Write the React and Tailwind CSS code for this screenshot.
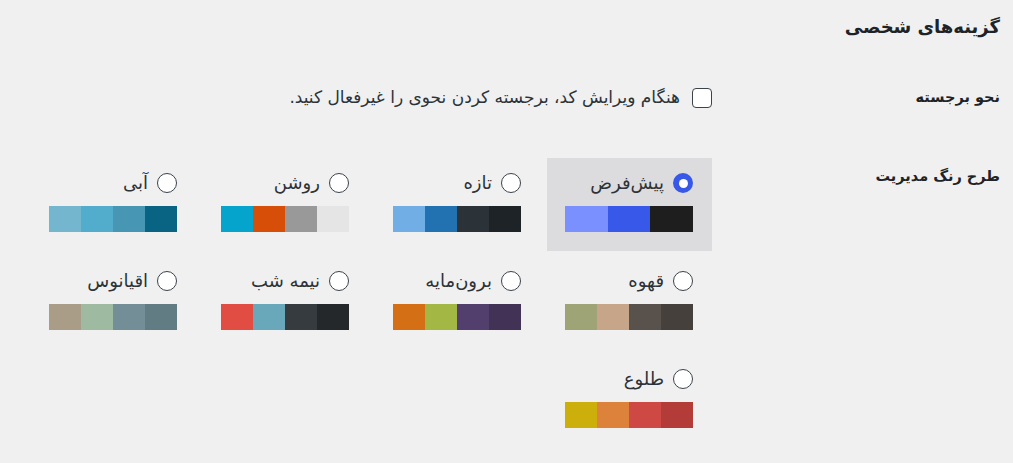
import React from "react";

const schemes = [
  { name: "پیش‌فرض", colors: ["#1e1e1e", "#3858e9", "#7b90ff"], selected: true },
  { name: "تازه", colors: ["#1d2327", "#2c3338", "#2271b1", "#72aee6"] },
  { name: "روشن", colors: ["#e5e5e5", "#999999", "#d64e07", "#04a4cc"] },
  { name: "آبی", colors: ["#096484", "#4796b3", "#52accc", "#74b6ce"] },
  { name: "قهوه", colors: ["#46403c", "#59524c", "#c7a589", "#9ea476"] },
  { name: "برون‌مایه", colors: ["#413256", "#523f6d", "#a3b745", "#d46f15"] },
  { name: "نیمه شب", colors: ["#25282b", "#363b3f", "#69a8bb", "#e14d43"] },
  { name: "اقیانوس", colors: ["#627c83", "#738e96", "#9ebaa0", "#aa9d88"] },
  { name: "طلوع", colors: ["#b43c38", "#cf4944", "#dd823b", "#ccaf0b"] },
];

function Radio({ checked }) {
  if (checked) {
    return (
      <span className="flex h-[20px] w-[20px] shrink-0 items-center justify-center rounded-full bg-[#3858e9]">
        <span className="h-[9px] w-[9px] rounded-full bg-white" />
      </span>
    );
  }
  return <span className="h-[20px] w-[20px] shrink-0 rounded-full border border-[#3c434a] bg-white" />;
}

export default function App() {
  return (
    <div
      dir="rtl"
      className="min-h-[463px] bg-[#f0f0f1] pr-[13px] pt-[13px] text-[#1d2327]"
      style={{ fontFamily: "'DejaVu Sans', 'Noto Sans', sans-serif" }}
    >
      <h2 className="text-[18px] font-bold leading-[28px]">گزینه‌های شخصی</h2>

      <div className="mt-[47px] flex h-[20px] items-center">
        <div className="w-[288px] shrink-0 text-[14.5px] font-bold">نحو برجسته</div>
        <label className="flex items-center gap-[12px]">
          <span className="h-[20px] w-[20px] shrink-0 rounded-[4px] border border-[#3c434a] bg-white" />
          <span className="text-[17px] text-[#2c3338]">هنگام ویرایش کد، برجسته کردن نحوی را غیرفعال کنید.</span>
        </label>
      </div>

      <div className="mt-[50px] flex">
        <div className="w-[288px] shrink-0 pt-[6px] text-[14.5px] font-bold leading-[24px]">طرح رنگ مدیریت</div>
        <div className="flex w-[681px] flex-wrap gap-x-[7px] gap-y-[5px]">
          {schemes.map((s) => (
            <div
              key={s.name}
              className={`h-[93px] w-[165px] pl-[18px] pr-[19px] pt-[15px] ${s.selected ? "bg-[#dcdcde]" : ""}`}
            >
              <div className="flex h-[20px] items-center gap-[9px]">
                <Radio checked={s.selected} />
                <span className="text-[18px] leading-[20px] text-[#2c3338]">{s.name}</span>
              </div>
              <div className="mt-[13px] flex h-[26px] w-[128px]">
                {s.colors.map((c, i) => (
                  <div key={i} className="h-full flex-1" style={{ backgroundColor: c }} />
                ))}
              </div>
            </div>
          ))}
        </div>
      </div>
    </div>
  );
}
